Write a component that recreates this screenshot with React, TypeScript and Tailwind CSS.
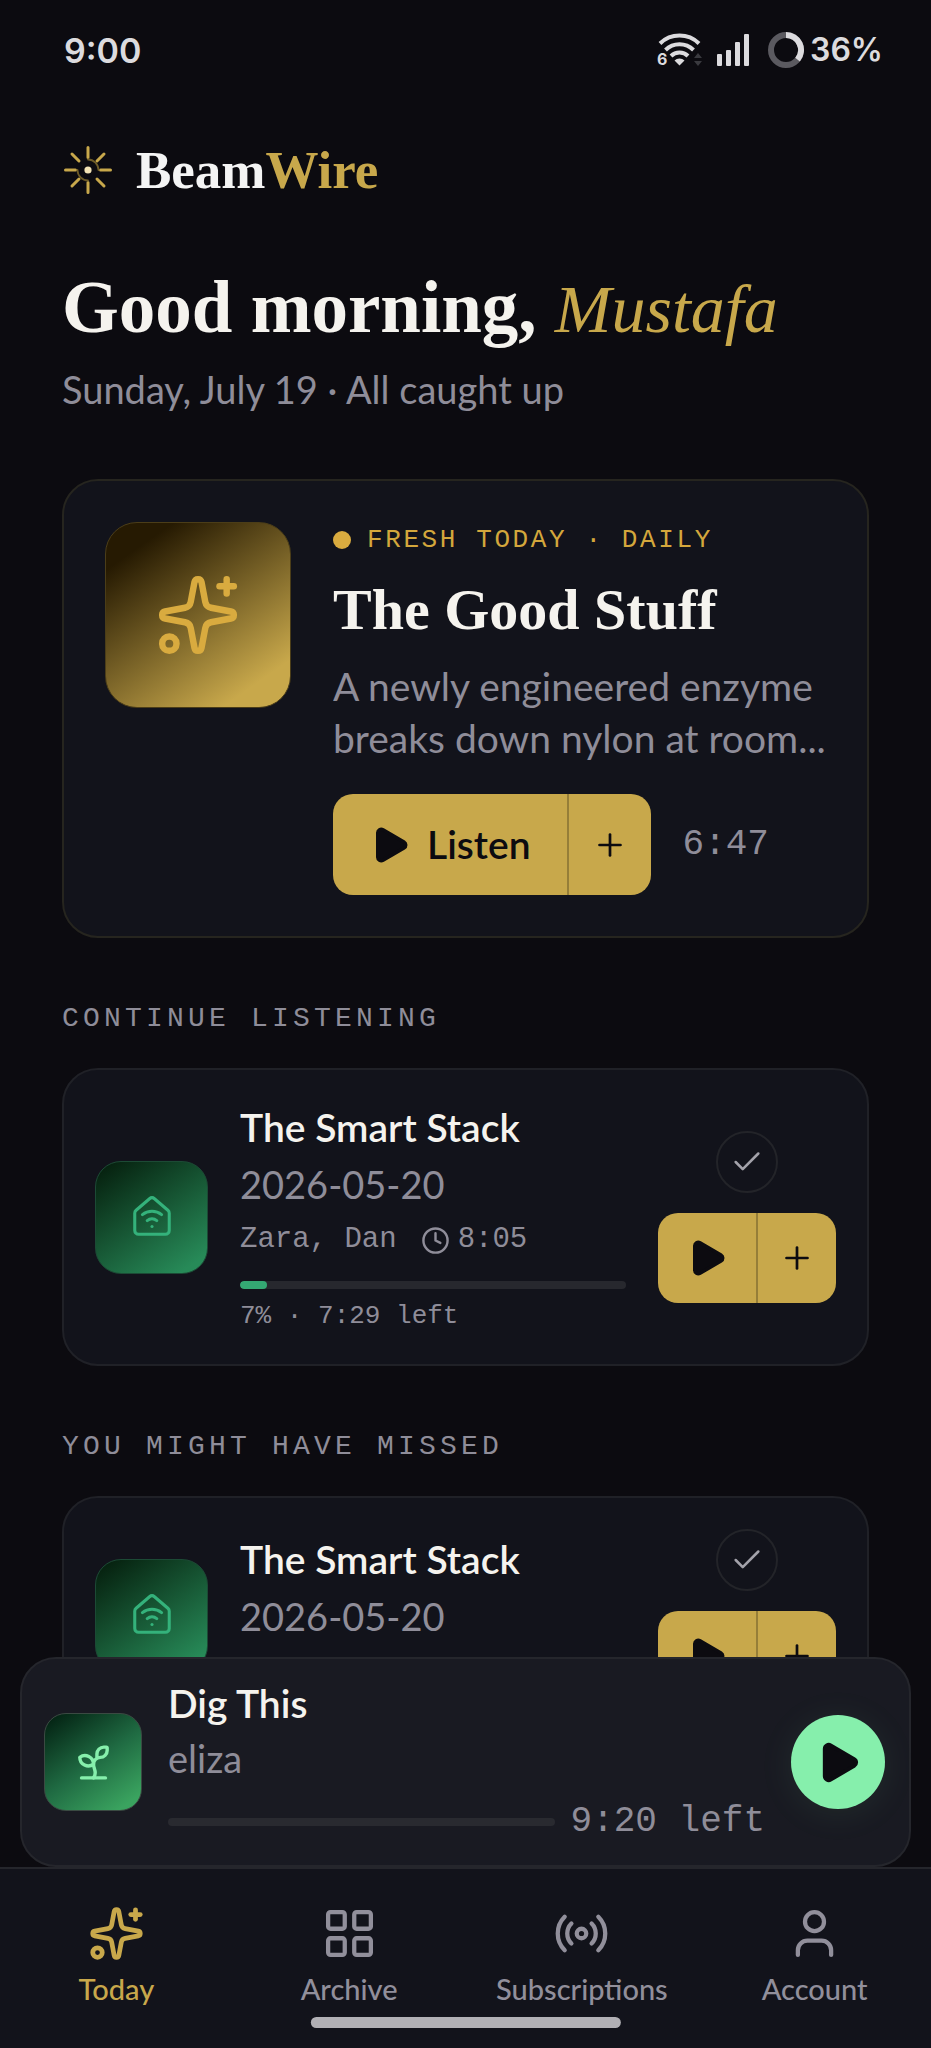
import { Check, Clock, HouseWifi, LayoutGrid, Play, Plus, Radio, Sparkles, Sprout, User } from 'lucide-react'
import type { LucideIcon } from 'lucide-react'

type Episode = {
  id: string
  title: string
  date: string
  hosts: string
  length: string
  progress?: number
  left?: string
}

const CONTINUE: Episode[] = [
  { id: 'continue-1', title: 'The Smart Stack', date: '2026-05-20', hosts: 'Zara, Dan', length: '8:05', progress: 7, left: '7:29 left' },
]

const MISSED: Episode[] = [
  { id: 'missed-1', title: 'The Smart Stack', date: '2026-05-20', hosts: 'Zara, Dan', length: '8:05' },
]

const TABS: { label: string; icon: LucideIcon; active?: boolean }[] = [
  { label: 'Today', icon: Sparkles, active: true },
  { label: 'Archive', icon: LayoutGrid },
  { label: 'Subscriptions', icon: Radio },
  { label: 'Account', icon: User },
]

function StatusBar() {
  return (
    <div className="flex h-[100px] shrink-0 items-center justify-between pl-16 pr-12 font-['Inter',sans-serif] font-semibold text-[#dcdbde]">
      <span className="text-[34px]">9:00</span>
      <div className="flex items-center">
        <svg width="50" height="40" viewBox="-2 -2 50 40" fill="none" aria-hidden="true">
          <g stroke="#dcdbde" strokeWidth="4">
            <path d="M4 11.500a28 28 0 0 1 39 0" />
            <path d="M9.500 18a20 20 0 0 1 28 0" />
            <path d="M15 24a12 12 0 0 1 17 0" />
          </g>
          <path d="M18.500 28.500a7 7 0 0 1 10 0l-5 5z" fill="#dcdbde" />
          <path d="M38 26l4-5 4 5zM38 29l4 5 4-5z" fill="#3a3a3f" />
          <text x="1" y="33" fontSize="16" fontWeight="700" fill="#dcdbde" stroke="#0c0b10" strokeWidth="3" paintOrder="stroke">6</text>
        </svg>
        <svg className="ml-3" width="36" height="36" viewBox="0 0 36 36" fill="#dcdbde" aria-hidden="true">
          <rect x="1" y="22" width="5" height="12" rx="1" />
          <rect x="10" y="18" width="5" height="16" rx="1" />
          <rect x="19" y="10" width="5" height="24" rx="1" />
          <rect x="28" y="2" width="5" height="32" rx="1" />
        </svg>
        <svg className="ml-4" width="36" height="36" viewBox="0 0 36 36" fill="none" strokeWidth="6" aria-hidden="true">
          <circle cx="18" cy="18" r="15" stroke="#5b5a60" />
          <path d="M18 3a15 15 0 0 1 11.560 24.560" stroke="#dcdbde" />
        </svg>
        <span className="ml-1.5 text-[32px]">36%</span>
      </div>
    </div>
  )
}

function BeamMark() {
  return (
    <svg width="48" height="48" viewBox="0 0 48 48" fill="none" strokeLinecap="round" aria-hidden="true">
      <g stroke="#c8a84b" strokeWidth="3">
        <path d="M24 1.500v10M24 36.500v10M1.500 24h10M36.500 24h10" />
        <path d="M8 8l7 7M40 8l-7 7M8 40l7-7M40 40l-7-7" />
      </g>
      <path d="M24 13.500a10.500 10.500 0 0 1 10.500 10.500M13.500 24a10.500 10.500 0 0 0 10.500 10.500" stroke="#6d5b28" strokeWidth="1.800" />
      <circle cx="24" cy="24" r="3.600" fill="#f3e3b5" />
    </svg>
  )
}

function FeaturedCard() {
  return (
    <article className="mt-[62px] flex items-start gap-[42px] rounded-[36px] border-2 border-[#26251f] bg-[#12131b] p-[41px]">
      <div className="flex size-[186px] shrink-0 items-center justify-center rounded-[32px] border border-[#4b3d18] bg-[linear-gradient(145deg,#261a02_15%,#c8a84b_85%)]">
        <Sparkles size={86} strokeWidth={1.8} className="text-[#d9ab3f]" />
      </div>
      <div className="min-w-0 flex-1">
        <div className="flex h-9 items-center gap-4 font-['Liberation_Mono',monospace] text-[26px] text-[#d4a73c]">
          <span className="size-[18px] shrink-0 rounded-full bg-[#d9ab3f]" />
          <span className="whitespace-nowrap uppercase tracking-widest">Fresh today · Daily</span>
        </div>
        <h2 className="mt-4 font-['Liberation_Serif',serif] text-[58px] leading-[72px] font-bold text-[#f5f3ee]">The Good Stuff</h2>
        <p className="mt-3.5 line-clamp-2 font-['Lato',sans-serif] text-[39px] leading-[52px] text-[#8f8d99]">
          A newly engineered enzyme breaks down nylon at room...
        </p>
        <div className="mt-[30px] flex items-center gap-8">
          <div className="flex h-[101px] overflow-hidden rounded-[20px] bg-[#c8a84b] text-[#0c0b10]">
            <button className="flex items-center gap-4 px-9 font-['Lato',sans-serif] text-[39px] font-semibold">
              <Play size={42} fill="currentColor" />
              Listen
            </button>
            <button aria-label="Add to queue" className="flex w-[84px] items-center justify-center border-l-2 border-[#967e38]">
              <Plus size={36} strokeWidth={1.8} />
            </button>
          </div>
          <span className="font-['Liberation_Mono',monospace] text-[36px] text-[#8f8d99]">6:47</span>
        </div>
      </div>
    </article>
  )
}

function EpisodeCard({ episode }: { episode: Episode }) {
  return (
    <article className="flex items-center gap-8 rounded-[36px] border-2 border-[#202127] bg-[#12131b] p-[31px]">
      <div className="flex size-[113px] shrink-0 items-center justify-center rounded-[26px] border border-[#1c4a35] bg-[linear-gradient(145deg,#06210f_5%,#278a58_90%)]">
        <HouseWifi size={46} strokeWidth={1.6} className="text-[#34b27b]" />
      </div>
      <div className="min-w-0 flex-1 text-[#8f8d99]">
        <h3 className="font-['Lato',sans-serif] text-[39px] leading-[52px] font-semibold text-[#f5f3ee]">{episode.title}</h3>
        <div className="font-['Lato',sans-serif] text-[38px] leading-[62px]">{episode.date}</div>
        <div className="flex items-center gap-6 font-['Liberation_Mono',monospace] text-[29px] leading-[50px]">
          <span>{episode.hosts}</span>
          <span className="flex items-center gap-2">
            <Clock size={29} />
            {episode.length}
          </span>
        </div>
        {episode.progress !== undefined && (
          <>
            <div role="progressbar" aria-label="Playback progress" aria-valuenow={episode.progress} className="mt-4 h-2 overflow-hidden rounded-full bg-[#27282e]">
              <div className="h-full rounded-full bg-[#34a873]" style={{ width: `${episode.progress}%` }} />
            </div>
            <div className="mt-2.5 font-['Liberation_Mono',monospace] text-[26px] leading-[34px]">
              {episode.progress}% · {episode.left}
            </div>
          </>
        )}
      </div>
      <div className="flex shrink-0 flex-col items-center gap-5">
        <button aria-label="Mark as played" className="flex size-[62px] items-center justify-center rounded-full border-2 border-[#232429] text-[#a3a2aa]">
          <Check size={34} strokeWidth={1.8} />
        </button>
        <div className="flex h-[90px] overflow-hidden rounded-[20px] bg-[#c8a84b] text-[#0c0b10]">
          <button aria-label="Play" className="flex w-[98px] items-center justify-center">
            <Play size={42} fill="currentColor" />
          </button>
          <button aria-label="Add to queue" className="flex w-20 items-center justify-center border-l-2 border-[#967e38]">
            <Plus size={36} strokeWidth={1.8} />
          </button>
        </div>
      </div>
    </article>
  )
}

function Section({ title, episodes }: { title: string; episodes: Episode[] }) {
  return (
    <section className="mt-[60px]">
      <h2 className="mb-7 font-['Liberation_Mono',monospace] text-[28px] leading-[42px] tracking-[0.15em] text-[#8f8d99] uppercase">{title}</h2>
      {episodes.map((episode) => (
        <EpisodeCard key={episode.id} episode={episode} />
      ))}
    </section>
  )
}

function MiniPlayer() {
  return (
    <div className="absolute inset-x-5 bottom-0 flex items-center gap-[26px] rounded-[36px] border-2 border-[#25262c] bg-[#191a22] pt-4 pr-6 pb-4 pl-[22px]">
      <div className="flex size-[98px] shrink-0 items-center justify-center rounded-[22px] border border-[#3a4a42] bg-[linear-gradient(145deg,#042414_5%,#1f6a42_50%,#3aa35f_90%)]">
        <Sprout size={41} className="text-[#86efac]" />
      </div>
      <div className="min-w-0 flex-1 font-['Lato',sans-serif] text-[#8f8d99]">
        <div className="text-[39px] leading-[56px] font-semibold text-[#f5f3ee]">Dig This</div>
        <div className="text-[38px] leading-[54px]">eliza</div>
        <div className="mt-2.5 flex items-center gap-4">
          <div role="progressbar" aria-label="Playback progress" aria-valuenow={0} className="h-2 flex-1 rounded-full bg-[#292a30]" />
          <span className="font-['Liberation_Mono',monospace] text-[36px] leading-[54px]">9:20 left</span>
        </div>
      </div>
      <button aria-label="Play" className="flex size-[94px] shrink-0 items-center justify-center rounded-full bg-[#86efac] text-[#0c0b10] shadow-[0_4px_36px_rgba(134,239,172,0.08)]">
        <Play size={47} fill="currentColor" />
      </button>
    </div>
  )
}

function TabBar() {
  return (
    <nav className="relative h-[181px] shrink-0 border-t-2 border-[#25262c] bg-[#12131b] pt-9">
      <ul className="grid grid-cols-4">
        {TABS.map(({ label, icon: Icon, active }) => (
          <li key={label}>
            <a href="#" className={`flex flex-col items-center gap-2 font-['Lato',sans-serif] text-[29px] leading-[38px] font-medium ${active ? 'text-[#c8a84b]' : 'text-[#918f9b]'}`}>
              <Icon size={57} strokeWidth={active ? 2 : 1.8} />
              {label}
            </a>
          </li>
        ))}
      </ul>
      <div className="absolute bottom-5 left-1/2 h-[11px] w-1/3 -translate-x-1/2 rounded-full bg-[#b1b0b5]" />
    </nav>
  )
}

export default function App() {
  return (
    <div className="flex h-screen flex-col overflow-hidden bg-[#0c0b10]">
      <StatusBar />
      <div className="relative min-h-0 flex-1">
        <main className="h-full overflow-y-auto px-[62px] [scrollbar-width:none]">
          <header className="mt-9 flex items-center gap-6 pl-0.5">
            <BeamMark />
            <span className="font-['Liberation_Serif',serif] text-[53px] leading-[68px] font-bold text-[#f4f4f4]">
              Beam<span className="text-[#c8a84b]">Wire</span>
            </span>
          </header>
          <h1 className="mt-[60px] font-['Liberation_Serif',serif] text-[73px] leading-[88px] font-bold text-[#f5f3ee]">
            Good morning, <em className="text-[68px] font-normal text-[#c8a84b]">Mustafa</em>
          </h1>
          <p className="mt-2 font-['Lato',sans-serif] text-[38px] leading-[56px] text-[#8f8d99]">Sunday, July 19 · All caught up</p>
          <FeaturedCard />
          <Section title="Continue listening" episodes={CONTINUE} />
          <Section title="You might have missed" episodes={MISSED} />
        </main>
        <MiniPlayer />
      </div>
      <TabBar />
    </div>
  )
}
